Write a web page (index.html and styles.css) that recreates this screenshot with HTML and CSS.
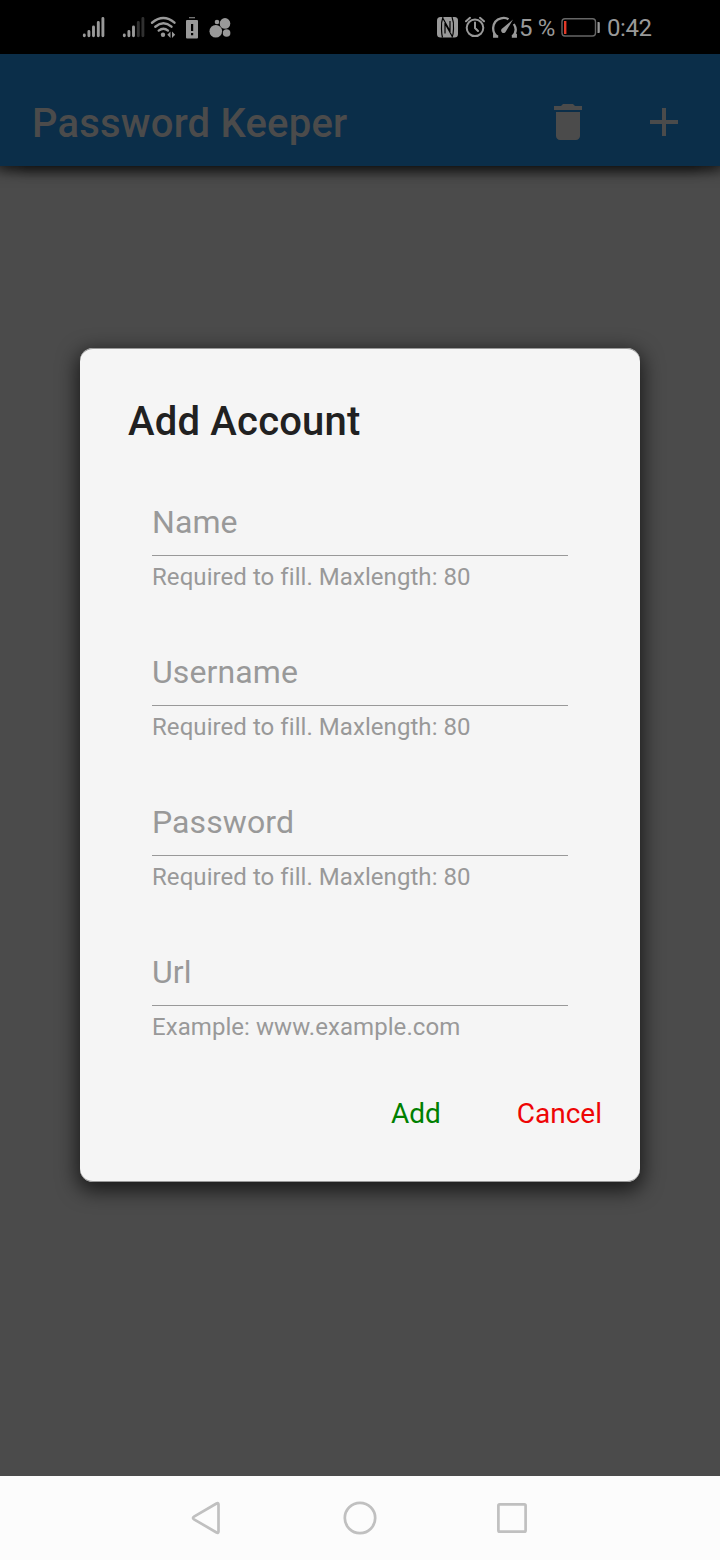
FILE: index.html
```html
<!DOCTYPE html>
<html lang="en">
<head>
<meta charset="utf-8">
<title>Password Keeper</title>
<link rel="stylesheet" href="styles.css">
</head>
<body>
<div class="screen">
  <div class="status">
    <div class="status-left">
      <svg width="40" height="54" viewBox="0 0 40 54" class="bars"><path d="M2.300 35v.7M6.900 31.500v4.200M11.500 27v8.700M16.300 22.500v13.200M20.900 18.500v17.200"/></svg>
      <svg width="28" height="54" viewBox="0 0 28 54" class="bars"><path d="M2.300 35v.7M6.900 31.500v4.200M11.500 27v8.700"/><path class="dim" d="M16.300 22.500v13.200M20.900 18.500v17.200"/></svg>
      <svg width="36" height="54" viewBox="0 0 36 54"><g class="line wifi"><path d="M2 22.700Q13.500 13.500 24.500 22.700M5.300 26.700Q13.500 20 21.500 26.700M8.700 30.600Q13.500 26.800 18 30.600"/></g><circle class="fill" cx="13" cy="34.700" r="2.200"/><path class="fill" d="M20.500 31.500v6.500l-3.200-3.200zM22 31.500v6.500l3.200-3.200z"/></svg>
      <svg width="23" height="54" viewBox="0 0 23 54"><path class="fill" d="M3 17.300h6v1h-6zM1 20h10q1 0 1 1v16.500q0 1-1 1H1q-1 0-1-1V21q0-1 1-1z"/><path class="cut" d="M5 24h2.200v7H5zM5 33h2.200v2.200H5z"/></svg>
      <svg width="24" height="54" viewBox="0 0 24 54"><g class="fill"><circle cx="6.800" cy="31.200" r="6.300"/><circle cx="16" cy="23.400" r="5.300"/><circle cx="17.600" cy="33" r="3.800"/><circle cx="8" cy="22" r="2.300"/></g></svg>
    </div>
    <div class="status-right">
      <svg width="28" height="54" viewBox="0 0 28 54"><rect class="fill" y="17" width="21" height="20.500" rx="3.500"/><path class="nfc-cut" d="M6 17Q4 22 4.500 29Q4.600 34 5.500 37.500M15 17Q17 22 16.500 29Q16.400 34 15 37.500M8 33.500V23.500L15 36M13 21V31L6 18.500"/></svg>
      <svg width="27" height="54" viewBox="0 0 27 54"><g class="line"><circle cx="10" cy="27.800" r="8.300"/><path d="M10 22.500v5.500l3 3M1 21.300l4-3.500M19 21.300l-4-3.500"/></g></svg>
      <svg width="27" height="54" viewBox="0 0 27 54"><g class="line gauge"><path d="M5.300 36.500Q.8 33.500 1.200 27.500Q2 20 9 18.300Q13.500 17.300 16.500 19.300M21.800 24Q26.300 31 20.300 36.500M2.200 33.800v2.700h4M23.800 33.800v2.700h-4"/></g><path class="fill" d="M21 19.500L14 31.300a2.500 2.500 0 1 1-3.500-3z"/></svg>
      <span class="pct">5 %</span>
      <svg width="40" height="54" viewBox="0 0 40 54"><rect class="cell" x="1" y="18.700" width="33.500" height="17.300" rx="3"/><path class="low" d="M3 21h2.400v13h-2.400z"/><path class="fill" d="M36.500 22h1.300q1 0 1 1v9q0 1-1 1h-1.300z"/></svg>
      <span class="clock">0:42</span>
    </div>
  </div>
  <div class="appbar">
    <div class="app-title">Password Keeper</div>
    <svg class="trash" width="48" height="48" viewBox="0 0 24 24"><path d="M6 19c0 1.100.9 2 2 2h8c1.100 0 2-.9 2-2V7H6v12zM19 4h-3.500l-1-1h-5l-1 1H5v2h14V4z"/></svg>
    <svg width="48" height="48" viewBox="0 0 24 24"><path d="M19 13h-6v6h-2v-6H5v-2h6V5h2v6h6v2z"/></svg>
  </div>
  <div class="body">
    <div class="dialog">
      <div class="dialog-title">Add Account</div>
      <div class="field"><div class="label">Name</div><div class="hint">Required to fill. Maxlength: 80</div></div>
      <div class="field"><div class="label">Username</div><div class="hint">Required to fill. Maxlength: 80</div></div>
      <div class="field"><div class="label">Password</div><div class="hint">Required to fill. Maxlength: 80</div></div>
      <div class="field"><div class="label">Url</div><div class="hint">Example: www.example.com</div></div>
      <div class="actions"><span class="add">Add</span><span class="cancel">Cancel</span></div>
    </div>
  </div>
  <div class="nav">
    <svg width="36" height="84" viewBox="0 0 36 84"><path d="M26.500 27.500L4 40.700Q2 42 4 43.300L26.500 56.500Q28.500 57.500 28.500 55.500V28.500Q28.500 26.500 26.500 27.500z"/></svg>
    <svg width="36" height="84" viewBox="0 0 36 84"><circle cx="18" cy="42" r="15.200"/></svg>
    <svg width="36" height="84" viewBox="0 0 36 84"><rect x="4.400" y="28.400" width="27.200" height="27.200" rx="1.200"/></svg>
  </div>
</div>
</body>
</html>
```
FILE: styles.css
```css
body { margin: 0; font-family: Roboto, sans-serif; }
svg { display: block; flex: none; }
.screen { width: 720px; height: 1560px; display: flex; flex-direction: column; background: #4b4b4b; overflow: hidden; }
.status { height: 54px; flex: none; background: #000; color: #999; display: flex; justify-content: space-between; box-sizing: border-box; padding: 0 64px 0 82px; position: relative; z-index: 1; }
.status-left, .status-right { display: flex; }
.status-right { width: 219px; }
.fill { fill: #999; }
.cut { fill: #000; }
.line, .bars { fill: none; stroke: #999; stroke-width: 2; stroke-linecap: round; }
.bars { stroke-width: 2.9; }
.bars .dim { stroke: #303030; }
.wifi { stroke-width: 2.4; }
.gauge { stroke-width: 2.3; stroke-linecap: butt; }
.nfc-cut { fill: none; stroke: #000; stroke-width: 1.2; }
.cell { fill: none; stroke: #666; stroke-width: 1.4; }
.low { fill: #e33a28; }
.pct, .clock { font-size: 24px; line-height: 57px; white-space: nowrap; flex: none; }
.pct { width: 42px; letter-spacing: -.3px; }
.clock { margin-left: 6px; letter-spacing: -.4px; }
.appbar { height: 112px; flex: none; box-sizing: border-box; padding: 24px 32px 0; background: #0b2e49; display: flex; align-items: center; box-shadow: 0 2px 12px 20px transparent, 0 4px 12px rgba(0,0,0,.6), -20px 4px 12px rgba(0,0,0,.3), 20px 4px 12px rgba(0,0,0,.3); }
.appbar svg { fill: #4b4b4b; }
.app-title { flex: 1; font-size: 40px; font-weight: 500; line-height: 48px; color: #4b4b4b; padding-top: 3px; letter-spacing: .2px; }
.trash { margin-right: 48px; }
.body { flex: 1; padding: 182px 80px 0; }
.dialog { height: 834px; box-sizing: border-box; padding: 50px 16px 0 48px; background: #f5f5f5; border-radius: 13px; box-shadow: inset 0 1px #999, inset 0 -1px #999, 0 6px 20px 3px rgba(0,0,0,.65); }
.dialog-title { font-size: 40px; font-weight: 500; line-height: 48px; color: #212121; height: 55px; letter-spacing: .2px; }
.field { height: 150px; margin: 0 56px 0 24px; box-sizing: border-box; padding-top: 49px; color: #999; }
.label { font-size: 32px; line-height: 40px; height: 53px; border-bottom: 1px solid #999; letter-spacing: .1px; }
.hint { font-size: 24px; line-height: 28px; padding-top: 7px; letter-spacing: .06px; white-space: nowrap; }
.actions { display: flex; justify-content: flex-end; padding: 44px 22px 0 0; gap: 76px; font-size: 28px; line-height: 34px; }
.add { color: #008000; }
.cancel { color: #ee0505; }
.nav { height: 84px; flex: none; background: #fcfcfc; display: flex; justify-content: center; gap: 116px; }
.nav svg { fill: none; stroke: #c0c0c0; stroke-width: 2.7; }
```
